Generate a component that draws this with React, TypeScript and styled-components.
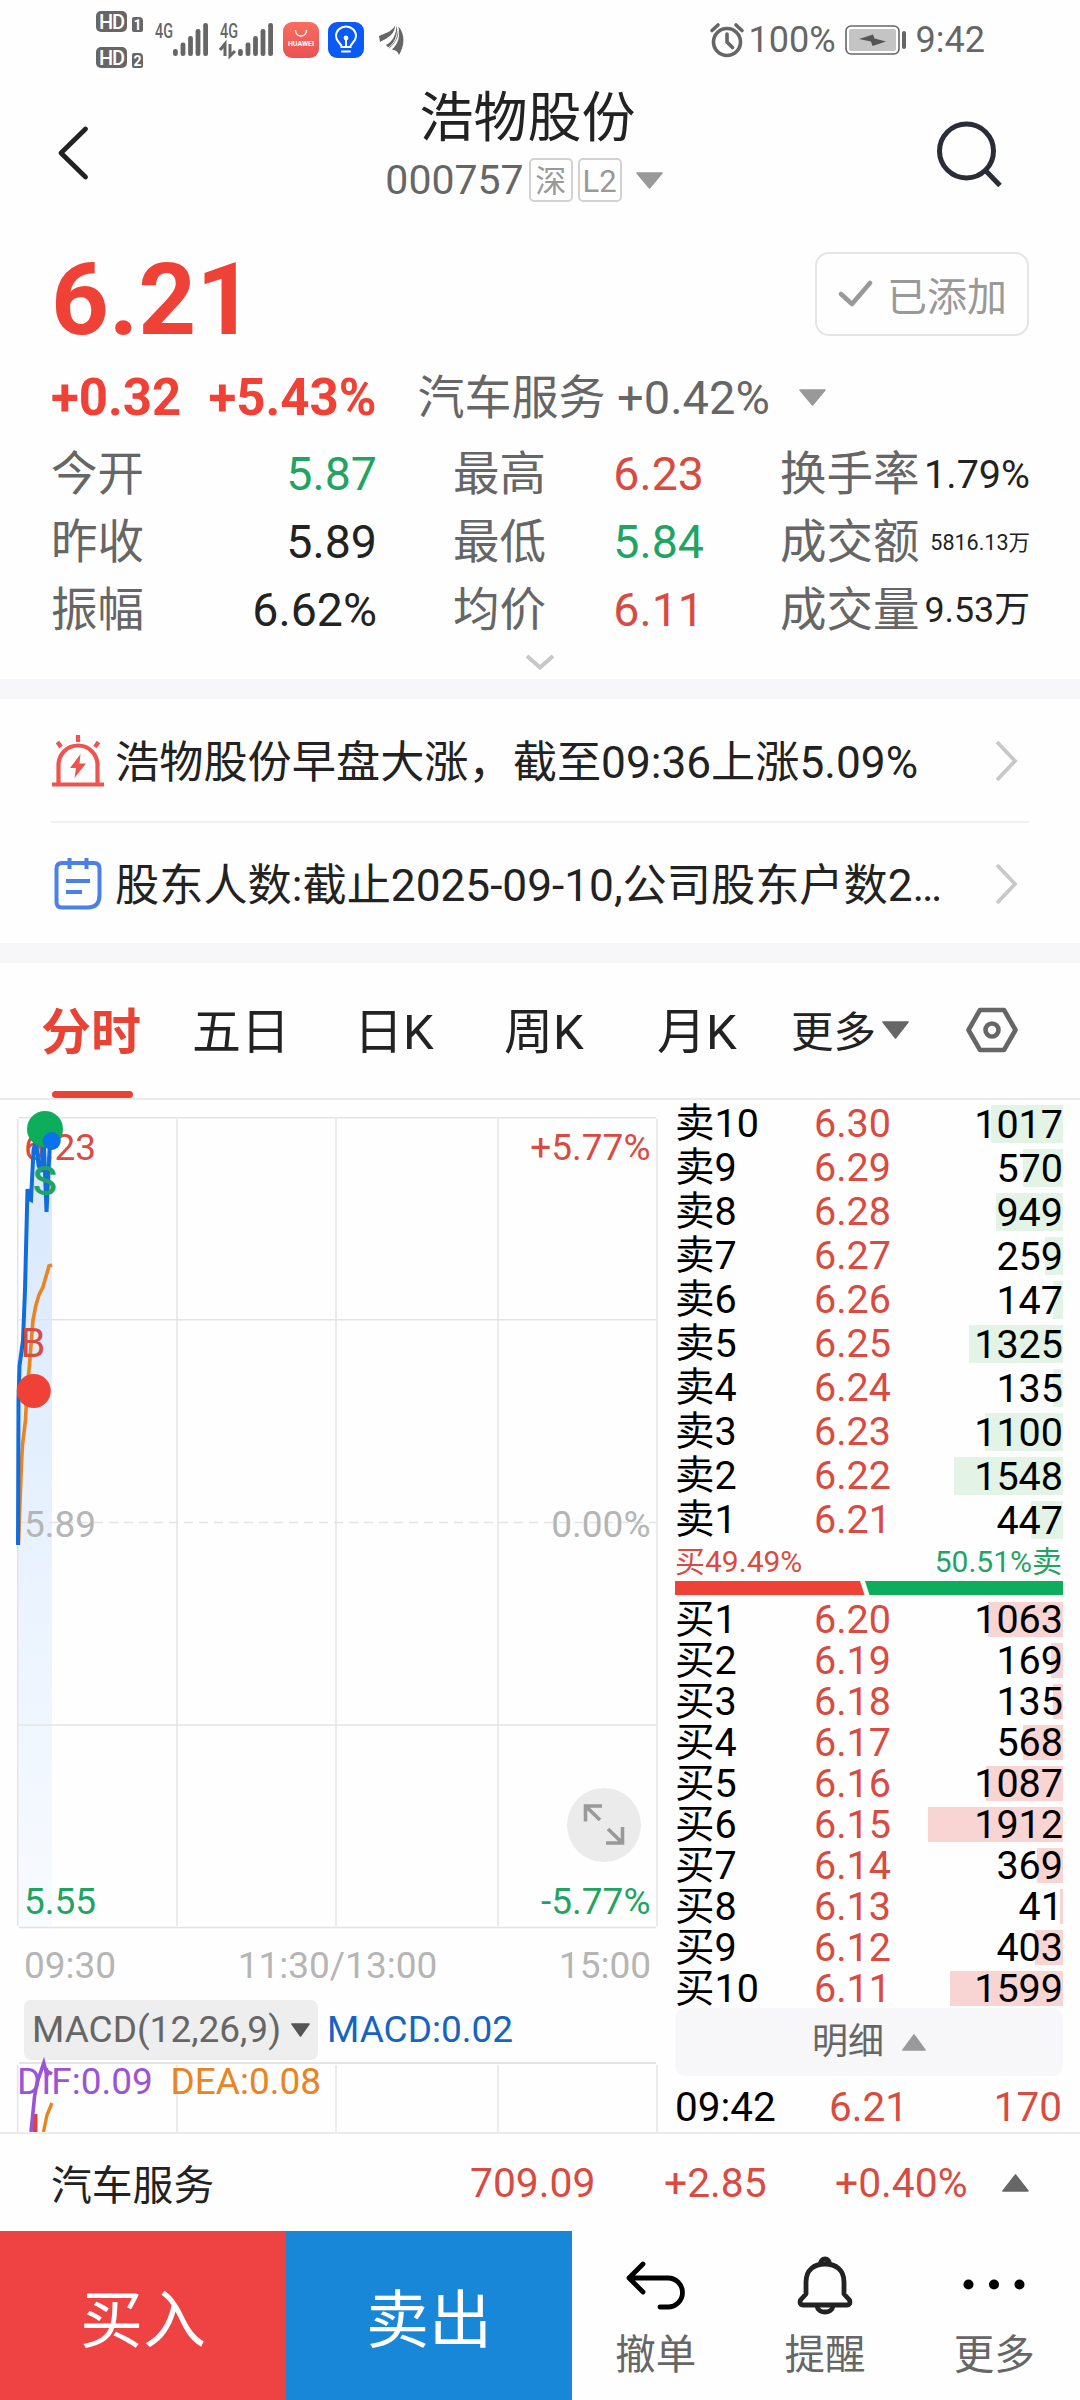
import React from "react";
import styled, { createGlobalStyle } from "styled-components";

const RED = "#d94b40";
const GREEN = "#1fa463";
const FONT = `Roboto, "Noto Sans CJK SC", sans-serif`;

const Global = createGlobalStyle`
  * { box-sizing: border-box; }
  body { margin: 0; background: #fefefe; font-family: ${FONT}; color: #222; }
  svg { display: block; flex: none; overflow: visible; }
`;

const Screen = styled.div`
  width: 1080px;
  height: 2400px;
  overflow: hidden;
  display: flex;
  flex-direction: column;
  background: #fefefe;
  white-space: nowrap;
`;

/* ---------- status bar ---------- */
const StatusBar = styled.div`
  height: 79px;
  padding: 0 95px 0 96px;
  display: flex;
  align-items: center;
  justify-content: space-between;
  color: #666;
`;
const StatusGroup = styled.div`
  display: flex;
  align-items: center;
`;
const HdColumn = styled.div`
  display: flex;
  flex-direction: column;
  gap: 15px;
  width: 59px;
`;
const HdLine = styled.div`
  display: flex;
  align-items: flex-end;
  gap: 5px;
`;
const HdBadge = styled.span`
  width: 31px;
  height: 21px;
  border-radius: 5px;
  background: #666;
  color: #fff;
  font-size: 20px;
  font-weight: 500;
  letter-spacing: -1px;
  line-height: 22px;
  text-align: center;
`;
const SimBadge = styled.span`
  width: 11px;
  height: 15px;
  border-radius: 2px 4px 2px 2px;
  background: #666;
  color: #fff;
  font-size: 14px;
  font-weight: 700;
  line-height: 16px;
  text-align: center;
`;
const Signal = styled.svg<{ $gap: number }>`
  margin-right: ${(p) => p.$gap}px;
`;
const AppBadge = styled.div<{ $bg: string }>`
  width: 36px;
  height: 36px;
  margin-right: 9px;
  border-radius: 9px;
  background: ${(p) => p.$bg};
  display: flex;
  flex-direction: column;
  align-items: center;
  justify-content: center;
`;
const HuaweiText = styled.span`
  color: #fff;
  font-size: 7px;
  font-weight: 700;
  line-height: 10px;
`;
const StatusText = styled.span<{ $left: number }>`
  margin-left: ${(p) => p.$left}px;
  font-size: 36px;
  line-height: 40px;
`;
const Battery = styled.svg`
  margin-left: 9px;
`;

/* ---------- header ---------- */
const Header = styled.header`
  height: 173px;
  display: grid;
  grid-template-columns: 88px 1fr 146px;
`;
const BackIcon = styled.div`
  padding-top: 47px;
  display: flex;
  justify-content: flex-end;
  align-items: flex-start;
`;
const SearchIcon = styled.div`
  padding-top: 41px;
`;
const TitleBlock = styled.div`
  padding-left: 33px;
  display: flex;
  flex-direction: column;
  align-items: center;
`;
const Title = styled.h1`
  margin: 0;
  padding-top: 2px;
  font-size: 54px;
  font-weight: 400;
  line-height: 76px;
  color: #222;
`;
const CodeRow = styled.div`
  display: flex;
  align-items: center;
  height: 46px;
  padding-right: 7px;
  font-size: 41px;
  line-height: 46px;
  color: #666;
`;
const Tag = styled.span`
  width: 44px;
  height: 44px;
  margin-left: 5px;
  border: 2px solid #d2d2d2;
  border-radius: 5px;
  color: #999;
  font-size: 31px;
  line-height: 43px;
  display: flex;
  justify-content: center;
`;
const CodeArrow = styled.span`
  margin-left: 14px;
`;

/* ---------- quote ---------- */
const Quote = styled.section`
  height: 427px;
  padding: 0 51px;
`;
const PriceRow = styled.div`
  height: 84px;
  display: flex;
  justify-content: space-between;
  align-items: flex-start;
`;
const Price = styled.div`
  padding-top: 6px;
  font-size: 101px;
  font-weight: 700;
  line-height: 84px;
  color: #ef4136;
`;
const AddedButton = styled.button`
  width: 214px;
  height: 84px;
  padding: 0 20px 0 21px;
  border: 2px solid #e5e5e5;
  border-radius: 14px;
  background: #fefefe;
  display: flex;
  align-items: center;
  justify-content: space-between;
  font-family: inherit;
  font-size: 40px;
  color: #999;
`;
const ChangeRow = styled.div`
  height: 83px;
  margin-top: 20px;
  margin-bottom: 1px;
  display: flex;
  align-items: center;
`;
const Change = styled.span<{ $gap: number }>`
  margin-right: ${(p) => p.$gap}px;
  font-size: 51px;
  font-weight: 700;
  line-height: 60px;
  color: #ef4136;
`;
const Sector = styled.span`
  margin-right: 29px;
  font-size: 47px;
  line-height: 60px;
  color: #666;
`;
const Stats = styled.div`
  display: grid;
  grid-template-columns: 326px 251px 250px;
  column-gap: 76px;
  margin-right: -2px;
  grid-auto-rows: 68px;
`;
const Stat = styled.div`
  padding-top: 1px;
  display: flex;
  align-items: center;
  justify-content: space-between;
  font-size: 46.5px;
  line-height: 67px;
  color: #666;
`;
const StatValue = styled.span<{ $color?: string; $size?: number }>`
  font-size: ${(p) => p.$size ?? 46.5}px;
  color: ${(p) => p.$color ?? "#222"};
`;
const ExpandStats = styled.div`
  height: 35px;
  display: flex;
  justify-content: center;
  align-items: center;
`;
const Band = styled.div`
  height: 20px;
  flex: none;
  background: #f7f7f9;
`;

/* ---------- news ---------- */
const News = styled.section`
  padding: 0 51px;
`;
const NewsRow = styled.div<{ $line?: boolean }>`
  height: ${(p) => (p.$line ? 124 : 120)}px;
  padding: 2px 12px 0 0;
  border-bottom: ${(p) => (p.$line ? "2px solid #efefef" : "0")};
  display: flex;
  align-items: center;
`;
const NewsText = styled.span`
  flex: 1;
  margin-left: 10px;
  padding-top: 3px;
  font-size: 44.2px;
  line-height: 60px;
  color: #222;
`;

/* ---------- tabs ---------- */
const Tabs = styled.nav`
  height: 137px;
  flex: none;
  display: flex;
  align-items: stretch;
  padding-left: 41px;
  border-bottom: 2px solid #ececec;
`;
const Tab = styled.div<{ $w: number; $active?: boolean; $size?: number }>`
  width: ${(p) => p.$w}px;
  display: flex;
  flex-direction: column;
  justify-content: space-between;
  font-size: ${(p) => p.$size ?? 49}px;
  font-weight: ${(p) => (p.$active ? 700 : 400)};
  line-height: 140px;
  color: ${(p) => (p.$active ? "#e94335" : "#222")};
`;
const TabMark = styled.i`
  width: 81px;
  height: 7px;
  margin: -12px 0 0 11px;
  border-radius: 4px;
  background: #e94335;
`;
const TabIcon = styled.div<{ $left: number; $top: number }>`
  margin-left: ${(p) => p.$left}px;
  padding-top: ${(p) => p.$top}px;
`;

/* ---------- main area ---------- */
const Main = styled.main`
  height: 1032px;
  flex: none;
  display: grid;
  grid-template-columns: 660px 1fr;
  overflow: hidden;
`;
const ChartColumn = styled.div`
  display: flex;
  flex-direction: column;
`;
const ChartSvg = styled.svg`
  font-family: ${FONT};
  font-size: 37px;
`;
const TimeAxis = styled.div`
  height: 69px;
  padding: 1px 9px 0 24px;
  display: flex;
  align-items: center;
  justify-content: space-between;
  font-size: 37px;
  color: #b5b5b5;
`;
const IndicatorRow = styled.div`
  height: 61px;
  padding-left: 24px;
  display: flex;
  align-items: center;
  font-size: 37px;
  line-height: 64px;
  color: #1565c0;
`;
const IndicatorChip = styled.span`
  width: 294px;
  height: 60px;
  margin-right: 9px;
  padding: 0 8px 0 8px;
  border-radius: 7px;
  background: #eee;
  color: #666;
  display: flex;
  align-items: center;
  justify-content: space-between;
`;
const Book = styled.div`
  padding: 1px 17px 0 15px;
  display: flex;
  flex-direction: column;
`;
const Level = styled.div<{ $h: number }>`
  height: ${(p) => p.$h}px;
  display: grid;
  grid-template-columns: 139px 100px 1fr;
  align-items: center;
  font-size: 39.5px;
  line-height: ${(p) => p.$h}px;
  color: #000;
`;
const LevelName = styled.span`
  padding-top: 1px;
`;
const LevelPrice = styled.span`
  padding-top: 1px;
  color: ${RED};
`;
const Volume = styled.span<{ $h: number; $side: "sell" | "buy" }>`
  height: ${(p) => p.$h}px;
  line-height: ${(p) => p.$h + 1}px;
  text-align: right;
  background-image: linear-gradient(
    ${(p) => (p.$side === "sell" ? "#e3f3e5, #e3f3e5" : "#f8d4d3, #f8d4d3")}
  );
  background-repeat: no-repeat;
  background-position: right center;
`;
const RatioRow = styled.div`
  height: 40px;
  padding-right: 1px;
  display: flex;
  justify-content: space-between;
  font-size: 30px;
  line-height: 41px;
`;
const Side = styled.span<{ $color: string }>`
  color: ${(p) => p.$color};
`;
const DetailButton = styled.div`
  height: 68px;
  border-radius: 10px;
  background: #f7f7f9;
  display: flex;
  align-items: center;
  justify-content: center;
  gap: 18px;
  font-size: 36px;
  line-height: 72px;
  color: #666;
`;
const Trade = styled.div`
  height: 56px;
  padding: 5px 1px 0 0;
  display: grid;
  grid-template-columns: 154px 100px 1fr;
  font-size: 40.5px;
  line-height: 52px;
  color: ${RED};
`;
const TradeTime = styled.span`
  color: #000;
`;
const TradeVolume = styled.span`
  text-align: right;
`;

/* ---------- bottom ---------- */
const IndexRow = styled.div`
  height: 99px;
  flex: none;
  padding: 0 51px;
  border-top: 2px solid #ececec;
  display: grid;
  grid-template-columns: 419px 194px 171px 167px 1fr;
  align-items: center;
  font-size: 40.8px;
  color: ${RED};
`;
const IndexName = styled.span`
  color: #222;
`;
const ActionBar = styled.footer`
  height: 169px;
  flex: none;
  display: grid;
  grid-template-columns: 286px 286px repeat(3, 1fr);
`;
const TradeButton = styled.div<{ $bg: string }>`
  background: ${(p) => p.$bg};
  color: #fff;
  font-size: 63px;
  line-height: 179px;
  text-align: center;
`;
const Action = styled.div`
  padding: 23px 2px 0 0;
  display: flex;
  flex-direction: column;
  align-items: center;
  font-size: 40.5px;
  line-height: 63px;
  color: #666;
`;

type TriProps = { w: number; h: number; color: string; up?: boolean };
const Triangle = ({ w, h, color, up }: TriProps) => (
  <svg width={w} height={h} viewBox={`0 0 ${w} ${h}`}>
    <path
      d={up ? `M1 ${h - 1}H${w - 1}L${w / 2} 1Z` : `M1 1H${w - 1}L${w / 2} ${h - 1}Z`}
      fill={color}
      stroke={color}
      strokeWidth="1.6"
      strokeLinejoin="round"
    />
  </svg>
);

const Chevron = () => (
  <svg width="22" height="42" viewBox="0 0 22 42">
    <path d="M2 2L20 21L2 40" fill="none" stroke="#c8c8c8" strokeWidth="3.8" />
  </svg>
);

const bars = [
  [2.4, 27],
  [10, 20.5],
  [17.5, 14],
  [25, 7],
  [32.6, 1],
];
const SignalBars = ({ x }: { x: number }) => (
  <>
    {bars.map(([bx, top]) => (
      <rect key={bx} x={x + bx - 2.4} y={top} width="4.8" height={34 - top} rx="2.2" fill="#666" />
    ))}
  </>
);

const sells: [string, string, number][] = [
  ["卖10", "6.30", 1017],
  ["卖9", "6.29", 570],
  ["卖8", "6.28", 949],
  ["卖7", "6.27", 259],
  ["卖6", "6.26", 147],
  ["卖5", "6.25", 1325],
  ["卖4", "6.24", 135],
  ["卖3", "6.23", 1100],
  ["卖2", "6.22", 1548],
  ["卖1", "6.21", 447],
];
const buys: [string, string, number][] = [
  ["买1", "6.20", 1063],
  ["买2", "6.19", 169],
  ["买3", "6.18", 135],
  ["买4", "6.17", 568],
  ["买5", "6.16", 1087],
  ["买6", "6.15", 1912],
  ["买7", "6.14", 369],
  ["买8", "6.13", 41],
  ["买9", "6.12", 403],
  ["买10", "6.11", 1599],
];
const MAX_VOLUME = 1912;

const Levels = ({ rows, side }: { rows: [string, string, number][]; side: "sell" | "buy" }) => (
  <>
    {rows.map(([name, price, vol]) => (
      <Level key={name} $h={side === "sell" ? 44 : 41}>
        <LevelName>{name}</LevelName>
        <LevelPrice>{price}</LevelPrice>
        <Volume
          $h={side === "sell" ? 38 : 35}
          $side={side}
          style={{ backgroundSize: `${Math.round((vol / MAX_VOLUME) * 135)}px 100%` }}
        >
          {vol}
        </Volume>
      </Level>
    ))}
  </>
);

const columns = [17.7, 177, 336, 498, 657];

const PriceChart = () => (
  <ChartSvg width="660" height="830" viewBox="0 1100 660 830">
    <defs>
      <linearGradient id="fill" x1="0" y1="0" x2="0" y2="1">
        <stop offset="0" stopColor="#d8e8fd" />
        <stop offset="1" stopColor="#f8fbff" />
      </linearGradient>
    </defs>
    <path
      d="M18 1545V1400L20 1366L23 1340L25 1290L27 1189H31L34 1145H52V1928H18Z"
      fill="url(#fill)"
    />
    <g stroke="#e4e4e4" strokeWidth="1.5">
      {columns.map((x) => (
        <path key={x} d={`M${x} 1119V1926`} />
      ))}
      {[1117.7, 1319.7, 1725, 1927.5].map((y) => (
        <path key={y} d={`M19 ${y}H656`} />
      ))}
      <path d="M19 1522.5H656" strokeDasharray="9 6" />
    </g>
    <text x="24" y="1159.7" fill={RED}>6.23</text>
    <text x="650.5" y="1159.7" fill={RED} textAnchor="end">+5.77%</text>
    <text x="24" y="1536.7" fill="#b5b5b5">5.89</text>
    <text x="650.5" y="1536.7" fill="#b5b5b5" textAnchor="end">0.00%</text>
    <text x="24" y="1914" fill={GREEN}>5.55</text>
    <text x="650.5" y="1914" fill={GREEN} textAnchor="end">-5.77%</text>
    <path
      d="M18.5 1545C20 1500 21 1470 22.5 1445L25.5 1420L27 1390L29.5 1365L33 1320L36 1305L39 1295L43 1287L49 1266L52 1265"
      fill="none"
      stroke="#e88422"
      strokeWidth="3.6"
    />
    <path
      d="M18 1545L18.5 1400L19.5 1366L23 1340L25 1290L27.5 1189L29 1199L31 1200L33.5 1150L36 1140L38.5 1165L41.5 1172L43.5 1135L46.5 1212L50 1141"
      fill="none"
      stroke="#116ddb"
      strokeWidth="4"
    />
    <circle cx="45" cy="1129" r="18" fill="#0dad5c" />
    <circle cx="51.7" cy="1141" r="9" fill="#0b72ee" />
    <circle cx="33.8" cy="1391" r="17" fill="#ef4136" />
    <text x="32.7" y="1195" fontSize="40" fontWeight="500" fill={GREEN}>S</text>
    <text x="20.5" y="1357" fontSize="40" fill={RED}>B</text>
    <circle cx="604" cy="1825" r="37" fill="#ebebeb" />
    <path
      d="M602 1806H585.5V1821.5M585.5 1806L600 1820M606 1843H622.5V1827M622.5 1843L608 1829"
      fill="none"
      stroke="#999"
      strokeWidth="3.6"
    />
  </ChartSvg>
);

const MacdChart = () => (
  <ChartSvg width="660" height="72" viewBox="0 2060 660 72">
    <g stroke="#e4e4e4">
      <path d="M19 2063H656" strokeWidth="2" />
      {columns.map((x) => (
        <path key={x} d={`M${x} 2065V2132`} strokeWidth="1.5" />
      ))}
    </g>
    <text x="17" y="2094.3" fill="#9a54d6">DIF:0.09</text>
    <text x="170.5" y="2094.3" fill="#e88422">DEA:0.08</text>
    <rect x="33" y="2114" width="4.5" height="18" fill="#e0413a" />
    <path
      d="M31 2132L34.5 2097L37 2083L43.8 2063L47 2075L48.5 2072L52 2074"
      fill="none"
      stroke="#9a54d6"
      strokeWidth="3.6"
    />
    <path d="M43.5 2132L47 2115L52 2103" fill="none" stroke="#e88422" strokeWidth="3.4" />
  </ChartSvg>
);

export default function App() {
  return (
    <Screen>
      <Global />
      <StatusBar>
        <StatusGroup>
          <HdColumn>
            <HdLine><HdBadge>HD</HdBadge><SimBadge>1</SimBadge></HdLine>
            <HdLine><HdBadge>HD</HdBadge><SimBadge>2</SimBadge></HdLine>
          </HdColumn>
          <Signal width="53" height="35" viewBox="0 0 53 35" $gap={12}>
            <text x="0" y="16" fontSize="21" fontWeight="500" fill="#666" textLength="18" lengthAdjust="spacingAndGlyphs">4G</text>
            <SignalBars x={18} />
          </Signal>
          <Signal width="53" height="35" viewBox="0 0 53 35" $gap={10}>
            <text x="0" y="16" fontSize="21" fontWeight="500" fill="#666" textLength="18" lengthAdjust="spacingAndGlyphs">4G</text>
            <path d="M0 28L5 22V34M10 22V34L15 29" fill="none" stroke="#666" strokeWidth="3" />
            <SignalBars x={18} />
          </Signal>
          <AppBadge $bg="linear-gradient(#f86f60, #ea5054)">
            <svg width="14" height="9" viewBox="0 0 14 9">
              <path d="M1.5 0C1.5 8 12.5 8 12.5 0" fill="none" stroke="#fff" strokeWidth="1.3" />
            </svg>
            <HuaweiText>HUAWEI</HuaweiText>
          </AppBadge>
          <AppBadge $bg="#0a5af5">
            <svg width="24" height="29" viewBox="0 0 24 29">
              <path
                d="M7.5 22C7.5 18 2 17 2 11A10 9.5 0 0 1 22 11C22 17 16.5 18 16.5 22Z M8 26.5H16 M12 22V13"
                fill="none"
                stroke="#fff"
                strokeWidth="2"
                strokeLinecap="round"
              />
              <circle cx="12" cy="13" r="2.4" fill="#fff" />
            </svg>
          </AppBadge>
          <svg width="38" height="30" viewBox="-6 0 38 30">
            <path
              d="M0 11C6 8 11 8 16 1C16 9 9 13 1 17ZM7 20C13 17 17 11 17.5 1C22 8 18 17 10 23.5ZM13 24.5C20 18 21 11 19.5 1.500C27 10 25 22 20 30C19 27 17 25 13 24.5Z"
              fill="#666"
            />
            <path d="M2 17C10 14 16 9 17 1M9 23C16 18 19 11 18.5 1" fill="none" stroke="#fefefe" strokeWidth="1" />
          </svg>
        </StatusGroup>
        <StatusGroup>
          <svg width="34" height="34" viewBox="0 0 34 34" fill="none" stroke="#666" strokeWidth="3.6">
            <circle cx="17" cy="19" r="13.5" />
            <path d="M17 11V19L22.5 24.5M2 7.5L8 2M32 7.5L26 2" strokeLinecap="round" />
          </svg>
          <StatusText $left={5}>100%</StatusText>
          <Battery width="62" height="30" viewBox="0 0 62 30">
            <rect x="1" y="1" width="53" height="28" rx="5" fill="#fff" stroke="#666" strokeWidth="1.6" />
            <rect x="4" y="4" width="47" height="22" rx="2" fill="#c4c4c4" />
            <path d="M14 14L28 9.5L29.5 13.5L41 16.5L27.5 21L26 16.5Z" fill="#555" />
            <rect x="57" y="6" width="4" height="18" rx="2" fill="#666" />
          </Battery>
          <StatusText $left={9}>9:42</StatusText>
        </StatusGroup>
      </StatusBar>

      <Header>
        <BackIcon>
          <svg width="31" height="54" viewBox="0 0 31 54">
            <path d="M28.5 3L4 27L28.5 51" fill="none" stroke="#222" strokeWidth="4.8" strokeLinecap="round" strokeLinejoin="round" />
          </svg>
        </BackIcon>
        <TitleBlock>
          <Title>浩物股份</Title>
          <CodeRow>
            000757
            <Tag>深</Tag>
            <Tag>L2</Tag>
            <CodeArrow><Triangle w={27} h={17} color="#999" /></CodeArrow>
          </CodeRow>
        </TitleBlock>
        <SearchIcon>
          <svg width="68" height="68" viewBox="0 0 68 68">
            <circle cx="32.5" cy="31" r="27" fill="none" stroke="#2a2d36" strokeWidth="5" />
            <path d="M51.5 50.5L66 65.5" stroke="#2a2d36" strokeWidth="5" />
          </svg>
        </SearchIcon>
      </Header>

      <Quote>
        <PriceRow>
          <Price>6.21</Price>
          <AddedButton>
            <svg width="36" height="30" viewBox="0 0 36 30">
              <path d="M3 15L14 25L32 4" fill="none" stroke="#999" strokeWidth="4.6" strokeLinecap="round" strokeLinejoin="round" />
            </svg>
            已添加
          </AddedButton>
        </PriceRow>
        <ChangeRow>
          <Change $gap={27}>+0.32</Change>
          <Change $gap={41}>+5.43%</Change>
          <Sector>汽车服务 +0.42%</Sector>
          <Triangle w={27} h={17} color="#999" />
        </ChangeRow>
        <Stats>
          <Stat>今开<StatValue $color={GREEN}>5.87</StatValue></Stat>
          <Stat>最高<StatValue $color={RED}>6.23</StatValue></Stat>
          <Stat>换手率<StatValue $size={39.5}>1.79%</StatValue></Stat>
          <Stat>昨收<StatValue>5.89</StatValue></Stat>
          <Stat>最低<StatValue $color={GREEN}>5.84</StatValue></Stat>
          <Stat>成交额<StatValue $size={21.5}>5816.13万</StatValue></Stat>
          <Stat>振幅<StatValue>6.62%</StatValue></Stat>
          <Stat>均价<StatValue $color={RED}>6.11</StatValue></Stat>
          <Stat>成交量<StatValue $size={35.8}>9.53万</StatValue></Stat>
        </Stats>
        <ExpandStats>
          <svg width="30" height="16" viewBox="0 0 30 16">
            <path d="M2 2L15 13.5L28 2" fill="none" stroke="#c8c8c8" strokeWidth="4" />
          </svg>
        </ExpandStats>
      </Quote>
      <Band />

      <News>
        <NewsRow $line>
          <svg width="54" height="54" viewBox="0 0 54 54" fill="none" stroke="#ef5350" strokeWidth="4.2">
            <path d="M7.5 49V31A19.5 19.5 0 0 1 46.5 31V49M1 50.5H53M27 1V8M6.5 8L10 13M47.5 8L44 13" />
            <path d="M29.5 20L19 34H25L23.5 44L35 29.5H28.5Z" fill="#ef5350" stroke="none" />
          </svg>
          <NewsText>浩物股份早盘大涨，截至09:36上涨5.09%</NewsText>
          <Chevron />
        </NewsRow>
        <NewsRow>
          <svg width="54" height="54" viewBox="0 0 54 54" fill="none" stroke="#4a80e8" strokeWidth="4">
            <path d="M11 6H43Q48.500 6 48.500 11.500V38Q48.500 50.500 37 50.500H11Q5.500 50.500 5.500 45V11.500Q5.500 6 11 6ZM18.500 1V12M35.500 1V12M15 24H39M15 35H31" />
          </svg>
          <NewsText>股东人数:截止2025-09-10,公司股东户数2…</NewsText>
          <Chevron />
        </NewsRow>
      </News>
      <Band />

      <Tabs>
        <Tab $w={151} $active $size={50}>
          分时
          <TabMark />
        </Tab>
        <Tab $w={162}>五日</Tab>
        <Tab $w={150}>日K</Tab>
        <Tab $w={153}>周K</Tab>
        <Tab $w={134}>月K</Tab>
        <Tab $w={91} $size={42.5}>更多</Tab>
        <TabIcon $left={0} $top={58}><Triangle w={27} h={18} color="#666" /></TabIcon>
        <TabIcon $left={56} $top={43}>
          <svg width="54" height="48" viewBox="0 0 54 48" fill="none" stroke="#666" strokeWidth="4.6">
            <path d="M15 4H39L50.5 24L39 44H15L3.5 24Z" strokeLinejoin="round" />
            <circle cx="27" cy="24" r="6.5" />
          </svg>
        </TabIcon>
      </Tabs>

      <Main>
        <ChartColumn>
          <PriceChart />
          <TimeAxis>
            <span>09:30</span>
            <span>11:30/13:00</span>
            <span>15:00</span>
          </TimeAxis>
          <IndicatorRow>
            <IndicatorChip>
              MACD(12,26,9)
              <Triangle w={19} h={14} color="#555" />
            </IndicatorChip>
            MACD:0.02
          </IndicatorRow>
          <MacdChart />
        </ChartColumn>
        <Book>
          <Levels rows={sells} side="sell" />
          <RatioRow>
            <Side $color={RED}>买49.49%</Side>
            <Side $color={GREEN}>50.51%卖</Side>
          </RatioRow>
          <svg width="388" height="17" viewBox="0 0 388 17">
            <path d="M0 0H185L189.5 14H0Z" fill="#ef4136" />
            <path d="M190 0H388V14H194.5Z" fill="#0dad5c" />
          </svg>
          <Levels rows={buys} side="buy" />
          <DetailButton>
            明细
            <Triangle w={24} h={17} color="#999" up />
          </DetailButton>
          <Trade>
            <TradeTime>09:42</TradeTime>
            <span>6.21</span>
            <TradeVolume>170</TradeVolume>
          </Trade>
        </Book>
      </Main>

      <IndexRow>
        <IndexName>汽车服务</IndexName>
        <span>709.09</span>
        <span>+2.85</span>
        <span>+0.40%</span>
        <Triangle w={27} h={18} color="#666" up />
      </IndexRow>
      <ActionBar>
        <TradeButton $bg="#ef4343">买入</TradeButton>
        <TradeButton $bg="#1987d7">卖出</TradeButton>
        <Action>
          <svg width="62" height="70" viewBox="0 0 62 70" fill="none" stroke="#000" strokeWidth="4.8" strokeLinecap="round" strokeLinejoin="round">
            <path d="M18 10L4 24L18 38M4 24H43A14.5 14.5 0 0 1 43 53H35" />
          </svg>
          撤单
        </Action>
        <Action>
          <svg width="62" height="70" viewBox="0 0 62 70" fill="none" stroke="#222" strokeWidth="4.8" strokeLinejoin="round">
            <path d="M12 40V28C12 16 20 10 31 10S50 16 50 28V40L55.5 46Q57 51 53 51H9Q5 51 6.5 46Z" />
            <path d="M26.5 10A4.5 5 0 0 1 35.5 10M23 52C24 60 38 60 39 52" />
          </svg>
          提醒
        </Action>
        <Action>
          <svg width="62" height="70" viewBox="0 0 62 70">
            <circle cx="5.5" cy="30.5" r="5" />
            <circle cx="31" cy="30.5" r="5" />
            <circle cx="56.5" cy="30.5" r="5" />
          </svg>
          更多
        </Action>
      </ActionBar>
    </Screen>
  );
}
